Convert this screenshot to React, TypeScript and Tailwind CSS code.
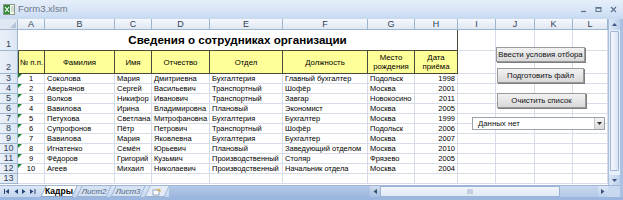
import React from "react";

const GRID =
  "grid grid-cols-[18px_27px_70px_37px_58px_73px_85px_47px_43px_38px_39px_38px_35px]";

const rows: string[][] = [
  ["1", "Соколова", "Мария", "Дмитриевна", "Бухгалтерия", "Главный бухгалтер", "Подольск", "1998"],
  ["2", "Аверьянов", "Сергей", "Васильевич", "Транспортный", "Шофёр", "Москва", "2001"],
  ["3", "Волков", "Никифор", "Иванович", "Транспортный", "Завгар", "Новокосино", "2011"],
  ["4", "Вавилова", "Ирина", "Владимировна", "Плановый", "Экономист", "Москва", "2005"],
  ["5", "Петухова", "Светлана", "Митрофановна", "Бухгалтерия", "Бухгалтер", "Москва", "1999"],
  ["6", "Супрофонов", "Пётр", "Петрович", "Транспортный", "Шофёр", "Подольск", "2006"],
  ["7", "Вавилова", "Мария", "Яковлевна", "Бухгалтерия", "Бухгалтер", "Москва", "2007"],
  ["8", "Игнатенко", "Семён", "Юрьевич", "Плановый", "Заведующий отделом", "Москва", "2010"],
  ["9", "Фёдоров", "Григорий", "Кузьмич", "Производственный", "Столяр", "Фрязево", "2005"],
  ["10", "Агеев", "Михаил", "Николаевич", "Производственный", "Начальник отдела", "Москва", "2004"],
];

const letters = ["A", "B", "C", "D", "E", "F", "G", "H", "I", "J", "K", "L"];
const headers = ["№ п.п.", "Фамилия", "Имя", "Отчество", "Отдел", "Должность", "Место рождения", "Дата приёма"];

const gridCell = "border-r border-b border-[#d6dce8] overflow-hidden whitespace-nowrap";

function RowHead({ n, tall }: { n: number; tall?: boolean }) {
  return (
    <div
      className={`flex justify-center border-r border-b border-[#9eb6ce] bg-gradient-to-r from-[#eaf0f8] to-[#dce6f4] text-[9px] text-[#2f3f58] leading-[9px] ${
        tall ? "items-end pb-[1px]" : "items-center"
      }`}
    >
      {n}
    </div>
  );
}

function EmptyCells({ count }: { count: number }) {
  return (
    <>
      {Array.from({ length: count }).map((_, i) => (
        <div key={i} className={gridCell} />
      ))}
    </>
  );
}

function Button({ label, className }: { label: string; className: string }) {
  return (
    <div
      className={`absolute flex items-center justify-center whitespace-nowrap border border-[#9a9a9a] bg-gradient-to-b from-[#f2f2f2] to-[#d9d9d9] text-[7.8px] text-[#111] shadow-[1px_1px_0_#7d7d7d] ${className}`}
    >
      {label}
    </div>
  );
}

export default function App() {
  return (
    <div className="flex h-[200px] w-[623px] flex-col overflow-hidden bg-[#bcd1ee] font-['Liberation_Sans',Arial,sans-serif]">
      {/* title bar */}
      <div className="flex h-[19px] items-center bg-gradient-to-b from-[#e6eefa] via-[#d9e6f7] to-[#c7d9f1] pl-[3px] pr-[6px]">
        <svg width="12" height="11" viewBox="0 0 12 11" className="mr-[3px]">
          <rect x="0.5" y="0.5" width="11" height="10" fill="#f4f7f2" stroke="#8a9a86" />
          <rect x="1" y="1" width="6" height="9" fill="#2f8a3a" />
          <path d="M2 3 L6 8 M6 3 L2 8" stroke="#fff" strokeWidth="1.2" />
          <path d="M8 3h3M8 5h3M8 7h3" stroke="#9bb39b" strokeWidth="0.8" />
        </svg>
        <span className="text-[9.5px] text-[#6b7687]">Form3.xlsm</span>
        <div className="ml-auto flex items-center gap-[8px] text-[#60738e]">
          <svg width="7" height="7" viewBox="0 0 7 7">
            <path d="M1 5.5h5" stroke="currentColor" strokeWidth="1.3" />
          </svg>
          <svg width="7" height="7" viewBox="0 0 7 7">
            <rect x="1" y="1.5" width="5" height="4" fill="none" stroke="currentColor" strokeWidth="1" />
            <path d="M1 2h5" stroke="currentColor" strokeWidth="1.4" />
          </svg>
          <svg width="7" height="7" viewBox="0 0 7 7">
            <path d="M1 1L6 6M6 1L1 6" stroke="currentColor" strokeWidth="1.2" />
          </svg>
        </div>
      </div>

      <div className="flex flex-1">
        <div className="flex w-[620px] flex-col">
          <div className="flex h-[166px]">
            {/* sheet */}
            <div className="relative w-[608px] bg-white">
              {/* column headers */}
              <div className={`${GRID} h-[11px]`}>
                <div className="relative border-r border-b border-[#9eb6ce] bg-[#dfe7f3]">
                  <span className="absolute bottom-[1px] right-[1px] h-0 w-0 border-b-[6px] border-l-[6px] border-b-[#b3c4da] border-l-transparent" />
                </div>
                {letters.map((l) => (
                  <div
                    key={l}
                    className="flex items-center justify-center border-r border-b border-[#9eb6ce] bg-gradient-to-b from-[#f5f8fc] to-[#dfe7f2] text-[9px] leading-[9px] text-[#2f3f58]"
                  >
                    {l}
                  </div>
                ))}
              </div>

              {/* row 1 */}
              <div className={`${GRID} h-[21px]`}>
                <RowHead n={1} tall />
                <div className="col-span-8 flex items-center justify-center border-r border-b border-[#4a4a3a] text-[11.6px] font-bold text-black">
                  Сведения о сотрудниках организации
                </div>
                <EmptyCells count={4} />
              </div>

              {/* row 2 */}
              <div className={`${GRID} h-[23px]`}>
                <RowHead n={2} tall />
                {headers.map((h, i) => (
                  <div
                    key={h}
                    className={`flex items-center justify-center border-r border-b border-[#4a4a3a] bg-[#ffff99] text-center text-[7.8px] leading-[9px] text-black ${
                      i === 0 ? "whitespace-nowrap border-l" : ""
                    }`}
                  >
                    {h}
                  </div>
                ))}
                <EmptyCells count={4} />
              </div>

              {/* data */}
              {rows.map((r, idx) => (
                <div key={idx} className={`${GRID} h-[10px] text-[7.5px] leading-[9px] text-black`}>
                  <RowHead n={idx + 3} />
                  <div className={`relative text-center ${gridCell}`}>
                    <span className="absolute left-0 top-0 h-0 w-0 border-t-[4px] border-r-[4px] border-t-[#1d7f2b] border-r-transparent" />
                    {r[0]}
                  </div>
                  {r.slice(1, 7).map((v, i) => (
                    <div key={i} className={`pl-[2px] ${gridCell}`}>
                      {v}
                    </div>
                  ))}
                  <div className={`pr-[2px] text-right ${gridCell}`}>{r[7]}</div>
                  <EmptyCells count={4} />
                </div>
              ))}

              {/* row 13 */}
              <div className={`${GRID} h-[10px]`}>
                <RowHead n={13} />
                <EmptyCells count={12} />
              </div>

              {/* floating form controls */}
              <Button label="Ввести условия отбора" className="left-[496px] top-[28px] h-[15px] w-[89px]" />
              <Button label="Подготовить файл" className="left-[497px] top-[49px] h-[15px] w-[87px]" />
              <Button label="Очистить список" className="left-[497px] top-[74px] h-[15px] w-[89px]" />
              <div className="absolute left-[472px] top-[98px] flex h-[13px] w-[133px] items-center border border-[#9aa3ad] bg-white text-[7.8px] text-[#111]">
                <span className="flex-1 pl-[5px]">Данных нет</span>
                <div className="flex h-full w-[10px] items-center justify-center border-l border-[#c8c8c8] bg-gradient-to-b from-[#f4f4f4] to-[#dadada]">
                  <svg width="5" height="3" viewBox="0 0 5 3">
                    <path d="M0 0h5L2.5 3z" fill="#333" />
                  </svg>
                </div>
              </div>
            </div>

            {/* vertical scrollbar */}
            <div className="flex w-[12px] flex-col border-l border-[#a9bedb] bg-[#e9eff8]">
              <div className="flex h-[11px] items-center justify-center bg-gradient-to-r from-[#dbe6f5] to-[#bcd0ec]">
                <svg width="5" height="3" viewBox="0 0 5 3">
                  <path d="M0 3h5L2.5 0z" fill="#3d5579" />
                </svg>
              </div>
              <div className="mx-[1px] mt-[1px] h-[140px] rounded-[1px] border border-[#9fb6d6] bg-gradient-to-r from-[#f4f7fc] to-[#dae5f4]" />
              <div className="flex-1" />
              <div className="flex h-[10px] items-center justify-center bg-gradient-to-r from-[#dbe6f5] to-[#bcd0ec]">
                <svg width="5" height="3" viewBox="0 0 5 3">
                  <path d="M0 0h5L2.5 3z" fill="#3d5579" />
                </svg>
              </div>
            </div>
          </div>

          {/* sheet tabs + horizontal scrollbar */}
          <div className="flex h-[12px] items-stretch border-t border-[#9fb6d8] bg-gradient-to-b from-[#dde8f6] to-[#c4d6ee]">
            <div className="flex w-[38px] items-center justify-around pl-[2px] text-[#27477a]">
              <svg width="6" height="5" viewBox="0 0 6 5">
                <path d="M0.5 0v5" stroke="currentColor" />
                <path d="M5 0v5L1.5 2.5z" fill="currentColor" />
              </svg>
              <svg width="4" height="5" viewBox="0 0 4 5">
                <path d="M4 0v5L0.5 2.5z" fill="currentColor" />
              </svg>
              <svg width="4" height="5" viewBox="0 0 4 5">
                <path d="M0 0v5L3.5 2.5z" fill="currentColor" />
              </svg>
              <svg width="6" height="5" viewBox="0 0 6 5">
                <path d="M0 0v5L3.5 2.5z" fill="currentColor" />
                <path d="M5 0v5" stroke="currentColor" />
              </svg>
            </div>
            <div className="relative ml-[3px] flex w-[36px] items-center justify-center">
              <span className="absolute inset-y-0 left-[2px] right-[2px] -skew-x-[25deg] border-x border-b border-[#8aa3c6] bg-white" />
              <span className="relative text-[8.5px] font-bold text-black">Кадры</span>
            </div>
            <div className="relative flex w-[34px] items-center justify-center">
              <span className="absolute inset-y-0 left-[2px] right-[2px] -skew-x-[25deg] border-x border-b border-[#9cb3d3] bg-[#d5e2f3]" />
              <span className="relative text-[8px] italic text-[#4c5f7c]">Лист2</span>
            </div>
            <div className="relative flex w-[34px] items-center justify-center">
              <span className="absolute inset-y-0 left-[2px] right-[2px] -skew-x-[25deg] border-x border-b border-[#9cb3d3] bg-[#d5e2f3]" />
              <span className="relative text-[8px] italic text-[#4c5f7c]">Лист3</span>
            </div>
            <div className="relative flex w-[24px] items-center justify-center">
              <span className="absolute inset-y-0 left-[2px] right-[2px] -skew-x-[25deg] border-x border-b border-[#9cb3d3] bg-[#e4ecf7]" />
              <svg width="10" height="8" viewBox="0 0 10 8" className="relative">
                <rect x="1" y="2" width="6" height="5" fill="#fff" stroke="#7d93b3" strokeWidth="0.8" />
                <path d="M5 1l1 1.5L8 0.5M7 3l2 0" stroke="#e0a020" strokeWidth="1" fill="none" />
              </svg>
            </div>
            <div className="w-[201px] bg-gradient-to-b from-[#b4c9e7] to-[#9db7de]" />
            <div className="flex w-[10px] items-center justify-center bg-gradient-to-b from-[#cfdcee] to-[#a8bfe0] text-[#34506f]">
              <svg width="4" height="5" viewBox="0 0 4 5">
                <path d="M4 0v5L0.5 2.5z" fill="currentColor" />
              </svg>
            </div>
            <div className="relative flex w-[180px] items-center justify-center border border-[#9db3d2] bg-gradient-to-b from-[#f1f5fb] to-[#dfe8f4]">
              <svg width="7" height="5" viewBox="0 0 7 5">
                <path d="M1 0v5M3 0v5M5 0v5" stroke="#8ea3c0" strokeWidth="0.8" />
              </svg>
            </div>
            <div className="flex-1 bg-gradient-to-b from-[#c8d8ee] to-[#b2c8e6]" />
            <div className="flex w-[10px] items-center justify-center bg-gradient-to-b from-[#dbe6f5] to-[#bcd0ec]">
              <svg width="4" height="5" viewBox="0 0 4 5">
                <path d="M0 0v5L3.5 2.5z" fill="#3d5579" />
              </svg>
            </div>
            <div className="w-[12px] bg-[#c8d8ee]" />
          </div>
        </div>
        <div className="w-[3px] bg-[#a9c1e3]" />
      </div>
      <div className="h-[3px] bg-[#9cb7df]" />
    </div>
  );
}
